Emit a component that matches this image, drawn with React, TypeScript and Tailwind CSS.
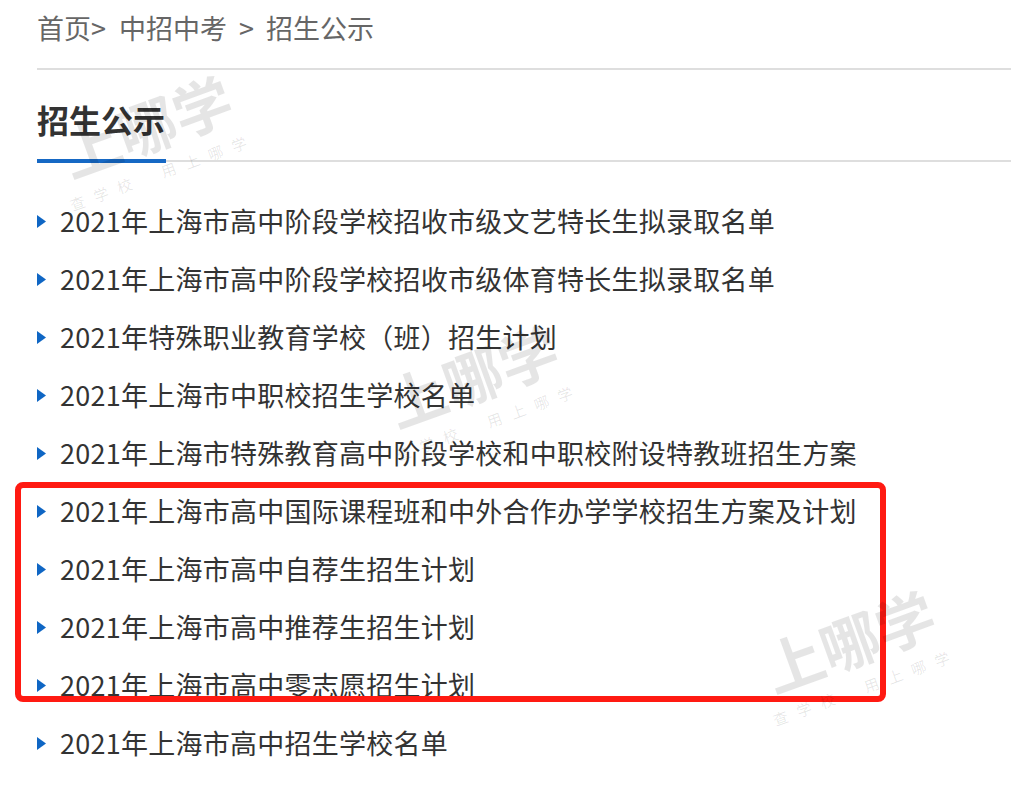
const items = [
  "2021年上海市高中阶段学校招收市级文艺特长生拟录取名单",
  "2021年上海市高中阶段学校招收市级体育特长生拟录取名单",
  "2021年特殊职业教育学校（班）招生计划",
  "2021年上海市中职校招生学校名单",
  "2021年上海市特殊教育高中阶段学校和中职校附设特教班招生方案",
  "2021年上海市高中国际课程班和中外合作办学学校招生方案及计划",
  "2021年上海市高中自荐生招生计划",
  "2021年上海市高中推荐生招生计划",
  "2021年上海市高中零志愿招生计划",
  "2021年上海市高中招生学校名单",
];

function Watermark({ className }: { className: string }) {
  return (
    <div
      className={`pointer-events-none absolute -translate-x-1/2 -translate-y-1/2 rotate-[-20deg] flex flex-col items-center text-black/[0.1] ${className}`}
    >
      <div className="text-[59px] leading-[60px] font-bold whitespace-nowrap">上哪学</div>
      <div className="mt-[10px] flex gap-[22px] text-[15px] leading-[20px] tracking-[10px] whitespace-nowrap">
        <span>查学校</span>
        <span>用上哪学</span>
      </div>
    </div>
  );
}

function Arrow() {
  return (
    <svg width="9" height="13" viewBox="0 0 9 13" className="shrink-0">
      <path d="M0 0 L9 6.5 L0 13 Z" fill="#0f66c4" />
    </svg>
  );
}

export default function App() {
  return (
    <div className="relative w-[1011px] h-[790px] overflow-hidden bg-white font-['Noto_Sans_CJK_SC',sans-serif]">
      <div className="pl-[37px]">
        <div className="h-[56px] flex items-center text-[27px] text-[#666] whitespace-nowrap">
          <span>首页</span>
          <span className="w-[15px] text-center">&gt;</span>
          <span className="ml-[13px]">中招中考</span>
          <span className="mx-[12px] w-[15px] text-center">&gt;</span>
          <span>招生公示</span>
        </div>
        <div className="mt-[12px] h-[2px] bg-[#dedede]" />
        <h2 className="pt-[33px] pb-[24px] text-[32px] leading-[32px] font-bold text-[#333]">
          招生公示
        </h2>
        <div className="flex items-center h-[4px]">
          <div className="w-[129px] h-[4px] bg-[#1668c4]" />
          <div className="flex-1 h-[2px] bg-[#dedede]" />
        </div>
        <ul className="mt-[29px]">
          {items.map((t) => (
            <li key={t} className="h-[58px] flex items-center gap-[14px]">
              <Arrow />
              <span className="text-[27px] leading-[58px] tracking-[0.25px] text-[#333] whitespace-nowrap">{t}</span>
            </li>
          ))}
        </ul>
      </div>

      <div className="pointer-events-none absolute left-[15px] top-[482px] w-[871px] h-[220px] border-[6px] border-[#ff1a12] rounded-[8px]" />

      <Watermark className="left-[151px] top-[139px]" />
      <Watermark className="left-[477px] top-[389px]" />
      <Watermark className="left-[854px] top-[654px]" />
    </div>
  );
}
